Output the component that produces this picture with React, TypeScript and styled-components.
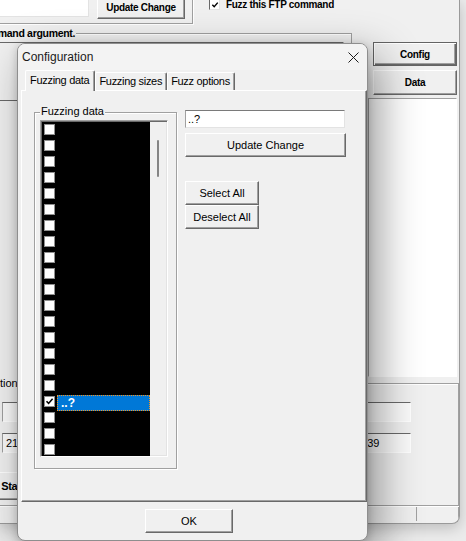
import React from 'react';
import styled, { createGlobalStyle } from 'styled-components';

const GlobalStyle = createGlobalStyle`
  *, *::before, *::after { box-sizing: border-box; }
  html, body { margin: 0; padding: 0; }
  body {
    background: #ebebeb;
    overflow: hidden;
    font-family: 'Liberation Sans', Arial, sans-serif;
  }
  #root { width: 466px; height: 541px; }
`;

const Desktop = styled.div`
  position: relative;
  width: 466px;
  height: 541px;
  overflow: hidden;
  background: #ebebeb;
`;

/* ---------- window behind the dialog ---------- */

const AppWindow = styled.div`
  position: absolute;
  left: 0;
  top: 0;
  width: 460px;
  height: 524px;
  display: grid;
  grid-template-columns: 368px 1fr;
  grid-template-rows: 377px 129px 1fr;
  background: #f0f0f0;
  border-right: 1px solid #9a9a9a;
  border-bottom: 1px solid #9a9a9a;
  border-bottom-right-radius: 8px;
  box-shadow: 0 4px 14px rgba(0, 0, 0, 0.2);
  overflow: hidden;
  font: bold 10px 'Liberation Sans', Arial, sans-serif;
  letter-spacing: -0.3px;
  color: #000;
`;

const MainColumn = styled.div`
  display: flex;
  flex-direction: column;
  min-width: 0;
`;

const TopRow = styled.div`
  display: flex;
  align-items: flex-start;
  height: 23px;
`;

const TopGroup = styled.div`
  flex: none;
  display: flex;
  align-items: flex-start;
  gap: 8px;
  width: 203px;
  height: 32px;
  margin: -8px 0 0 -10px;
  padding: 4px 0 0 10px;
  border-right: 1px solid #a0a0a0;
  border-bottom: 1px solid #a0a0a0;
  box-shadow: 1px 1px 0 #fff;
`;

const TopField = styled.div`
  width: 89px;
  height: 21px;
  background: #fff;
  border-right: 1px solid #e3e3e3;
  border-bottom: 1px solid #e3e3e3;
`;

const BgButton = styled.div<{ $default?: boolean; $w?: number; $h: number }>`
  flex: none;
  display: flex;
  align-items: center;
  justify-content: center;
  width: ${(p) => (p.$w ? `${p.$w}px` : '100%')};
  height: ${(p) => p.$h}px;
  background: #f0f0f0;
  border: 1px solid;
  border-color: ${(p) => (p.$default ? '#646464' : '#fff #696969 #696969 #fff')};
  box-shadow: ${(p) =>
    p.$default
      ? 'inset 1px 1px 0 #fff, inset -1px -1px 0 #696969, inset -2px -2px 0 #a0a0a0'
      : 'inset -1px -1px 0 #a0a0a0'};
  white-space: nowrap;
`;

const FuzzCheck = styled.div`
  display: flex;
  align-items: center;
  gap: 6px;
  height: 11px;
  margin: -1px 0 0 16px;
  white-space: nowrap;
`;

const BgCheckBox = styled.div`
  width: 11px;
  height: 11px;
  background: #fff;
  border: 1px solid;
  border-color: #696969 #e3e3e3 #e3e3e3 #696969;
  display: flex;
  align-items: center;
  justify-content: center;
`;

const ArgGroup = styled.div`
  position: relative;
  flex: 1;
  width: 382px;
  margin: 10px 0 0 -30px;
  padding-top: 8px;
  border-top: 1px solid #a0a0a0;
  border-right: 1px solid #a0a0a0;
  box-shadow: inset 1px 1px 0 #fff;
`;

const BgLegend = styled.span<{ $left: number; $bold?: boolean }>`
  position: absolute;
  top: -7px;
  left: ${(p) => p.$left}px;
  padding: 0 1px;
  background: #f0f0f0;
  line-height: 13px;
  white-space: nowrap;
  font-weight: ${(p) => (p.$bold ? 'bold' : 'normal')};
  font-size: ${(p) => (p.$bold ? 10.5 : 11)}px;
  letter-spacing: ${(p) => (p.$bold ? '-0.3px' : 'normal')};
`;

const ArgBox = styled.div<{ $h: number }>`
  width: 374px;
  height: ${(p) => p.$h}px;
  margin-bottom: 2px;
  border-top: 1px solid #696969;
  border-right: 1px solid #fff;
`;

const SideColumn = styled.div`
  display: flex;
  flex-direction: column;
  gap: 4px;
  padding: 42px 4px 0 5px;
`;

const WhitePanel = styled.div`
  flex: 1;
  width: 89px;
  margin: -1px 0 0 -5px;
  background: #fff;
  border: 1px solid;
  border-color: #a0a0a0 #fff #fff #a0a0a0;
`;

const ConnectionGroup = styled.div`
  grid-column: 1 / -1;
  position: relative;
  display: flex;
  align-items: flex-start;
  height: 123px;
  margin: 6px 2px 0 -60px;
  padding: 18px 47px 0 61px;
  border: 1px solid #a0a0a0;
  box-shadow: inset 1px 1px 0 #fff, 1px 1px 0 #fff;
`;

const FieldColumn = styled.div<{ $right?: boolean }>`
  display: flex;
  flex-direction: column;
  gap: 11px;
  margin-left: ${(p) => (p.$right ? 'auto' : '0')};
`;

const BgField = styled.div<{ $w: number }>`
  width: ${(p) => p.$w}px;
  height: 20px;
  padding: 3px 0 0 3px;
  background: #fafafa;
  border: 1px solid;
  border-color: #696969 #fff #fff #a0a0a0;
  font: 11px 'Liberation Sans', Arial, sans-serif;
  letter-spacing: normal;
`;

const StartButton = styled(BgButton)`
  margin: 8px 0 0 -29px;
  font-size: 11px;
`;

const StatusBar = styled.div`
  grid-column: 1 / -1;
  display: flex;
  padding: 1px 2px 2px 0;
`;

const StatusCell = styled.div<{ $w?: number }>`
  flex: ${(p) => (p.$w ? `0 0 ${p.$w}px` : '1')};
  border-right: 1px solid #a0a0a0;
`;

/* ---------- configuration dialog ---------- */

const Dialog = styled.div`
  position: absolute;
  left: 17px;
  top: 43px;
  width: 351px;
  height: 498px;
  display: flex;
  flex-direction: column;
  background: #f0f0f0;
  border: 1px solid #8e8e8e;
  border-radius: 8px;
  box-shadow: 10px 14px 44px rgba(0, 0, 0, 0.42), 0 2px 8px rgba(0, 0, 0, 0.18);
  overflow: hidden;
  font: 11px 'Liberation Sans', Arial, sans-serif;
  color: #000;
`;

const TitleBar = styled.div`
  flex: none;
  display: flex;
  align-items: center;
  justify-content: space-between;
  height: 26px;
  padding: 0 8px 0 4px;
  background: #f3f3f3;
  font-size: 12px;
  color: #1b1b1b;
`;

const TabStrip = styled.div`
  flex: none;
  display: flex;
  align-items: flex-end;
  height: 20px;
  padding-left: 7px;
  letter-spacing: -0.3px;
`;

const Tab = styled.div<{ $active?: boolean }>`
  position: relative;
  z-index: ${(p) => (p.$active ? 1 : 0)};
  height: ${(p) => (p.$active ? 21 : 18)}px;
  margin-bottom: ${(p) => (p.$active ? -1 : 0)}px;
  padding: ${(p) => (p.$active ? '3px 5px 0 4px' : '2px 4px 0 3px')};
  background: #f0f0f0;
  border-top: 1px solid #fff;
  border-left: 1px solid #fff;
  border-right: 1px solid #696969;
  border-radius: 2px 2px 0 0;
  box-shadow: inset -1px 0 0 #a0a0a0;
  white-space: nowrap;
`;

const TabPanel = styled.div`
  flex: none;
  display: flex;
  align-items: flex-start;
  width: 346px;
  height: 412px;
  margin-left: 3px;
  border: 1px solid;
  border-color: #fff #696969 #696969 #fff;
  box-shadow: inset -1px -1px 0 #a0a0a0;
`;

const GroupBox = styled.div`
  position: relative;
  flex: none;
  width: 143px;
  height: 357px;
  margin: 21px 0 0 12px;
  border: 1px solid #a0a0a0;
  box-shadow: inset 1px 1px 0 #fff, 1px 1px 0 #fff;
`;

const GroupLegend = styled.span`
  position: absolute;
  top: -8px;
  left: 5px;
  padding: 0 1px;
  background: #f0f0f0;
  line-height: 13px;
`;

const ListBox = styled.div`
  display: flex;
  width: 128px;
  height: 337px;
  margin: 7px 0 0 5px;
  padding: 1px 0 0 1px;
  background: #f0f0f0;
  border: 1px solid;
  border-color: #a0a0a0 #fff #fff #a0a0a0;
  box-shadow: inset 1px 1px 0 #696969, inset -1px -1px 0 #e3e3e3;
`;

const Rows = styled.div`
  flex: 0 0 108px;
  background: #000;
  overflow: hidden;
`;

const ListRow = styled.div`
  display: flex;
  align-items: flex-start;
  gap: 2px;
  height: 16px;
  padding: 2px 0 0 2px;
`;

const CheckBox = styled.div`
  flex: none;
  display: flex;
  align-items: center;
  justify-content: center;
  width: 11px;
  height: 11px;
  background: #fff;
  border: 1px solid #8f8f8f;
`;

const ItemLabel = styled.div`
  width: 93px;
  height: 16px;
  margin-top: -1px;
  padding: 1px 0 0 3px;
  background: #0078d7;
  border: 1px dotted #f7931e;
  color: #fff;
  font-weight: bold;
  font-size: 12px;
  line-height: 13px;
`;

const ScrollTrack = styled.div`
  flex: 1;
  padding: 18px 0 0 7px;
`;

const ScrollThumb = styled.div`
  width: 2px;
  height: 37px;
  border-radius: 1px;
  background: #858585;
`;

const Controls = styled.div`
  display: flex;
  flex-direction: column;
  align-items: flex-start;
  margin: 19px 0 0 8px;
`;

const EditBox = styled.input`
  width: 160px;
  height: 18px;
  margin: 0;
  padding: 0 2px;
  background: #fff;
  border: 1px solid;
  border-color: #7a7a7a #e3e3e3 #e3e3e3 #a0a0a0;
  font: 11px 'Liberation Sans', Arial, sans-serif;
  color: #000;
  outline: none;
`;

const Button = styled.div<{ $w: number; $gap?: number }>`
  display: flex;
  align-items: center;
  justify-content: center;
  width: ${(p) => p.$w}px;
  height: 24px;
  margin-top: ${(p) => p.$gap ?? 0}px;
  background: #f0f0f0;
  border: 1px solid;
  border-color: #fff #696969 #696969 #fff;
  box-shadow: inset -1px -1px 0 #a0a0a0;
  white-space: nowrap;
`;

const Footer = styled.div`
  display: flex;
  padding: 7px 0 0 127px;
`;

const Check = ({ size = 9 }: { size?: number }) => (
  <svg width={size} height={size} viewBox="0 0 9 9">
    <path d="M1.5 4.2 L3.6 6.4 L7.6 1.8" fill="none" stroke="#000" strokeWidth="1.6" />
  </svg>
);

const CloseIcon = () => (
  <svg width="11" height="11" viewBox="0 0 11 11">
    <path d="M0.5 0.5 L10.5 10.5 M10.5 0.5 L0.5 10.5" stroke="#1b1b1b" strokeWidth="1" />
  </svg>
);

const items = Array.from({ length: 24 }, (_, i) => (i === 17 ? '..?' : ''));

export default function App() {
  return (
    <Desktop>
      <GlobalStyle />
      <AppWindow>
        <MainColumn>
          <TopRow>
            <TopGroup>
              <TopField />
              <BgButton $w={88} $h={23}>
                Update Change
              </BgButton>
            </TopGroup>
            <FuzzCheck>
              <BgCheckBox>
                <Check size={8} />
              </BgCheckBox>
              Fuzz this FTP command
            </FuzzCheck>
          </TopRow>
          <ArgGroup>
            <BgLegend $left={6} $bold>
              command argument.
            </BgLegend>
            <ArgBox $h={56} />
            <ArgBox $h={260} />
          </ArgGroup>
        </MainColumn>

        <SideColumn>
          <BgButton $default $h={24}>
            Config
          </BgButton>
          <BgButton $h={25}>Data</BgButton>
          <WhitePanel />
        </SideColumn>

        <ConnectionGroup>
          <BgLegend $left={20}>Connection</BgLegend>
          <FieldColumn>
            <BgField $w={120} />
            <BgField $w={120}>21</BgField>
            <StartButton $w={80} $h={28}>
              Start
            </StartButton>
          </FieldColumn>
          <FieldColumn $right>
            <BgField $w={60} />
            <BgField $w={60}>1039</BgField>
          </FieldColumn>
        </ConnectionGroup>

        <StatusBar>
          <StatusCell $w={417} />
          <StatusCell />
        </StatusBar>
      </AppWindow>

      <Dialog>
        <TitleBar>
          <span>Configuration</span>
          <CloseIcon />
        </TitleBar>
        <TabStrip>
          <Tab $active>Fuzzing data</Tab>
          <Tab>Fuzzing sizes</Tab>
          <Tab>Fuzz options</Tab>
        </TabStrip>
        <TabPanel>
          <GroupBox>
            <GroupLegend>Fuzzing data</GroupLegend>
            <ListBox>
              <Rows>
                {items.map((text, i) => (
                  <ListRow key={i}>
                    <CheckBox>{text && <Check />}</CheckBox>
                    {text && <ItemLabel>{text}</ItemLabel>}
                  </ListRow>
                ))}
              </Rows>
              <ScrollTrack>
                <ScrollThumb />
              </ScrollTrack>
            </ListBox>
          </GroupBox>
          <Controls>
            <EditBox readOnly value="..?" />
            <Button $w={161} $gap={5}>
              Update Change
            </Button>
            <Button $w={74} $gap={24}>
              Select All
            </Button>
            <Button $w={74}>Deselect All</Button>
          </Controls>
        </TabPanel>
        <Footer>
          <Button $w={88}>OK</Button>
        </Footer>
      </Dialog>
    </Desktop>
  );
}
